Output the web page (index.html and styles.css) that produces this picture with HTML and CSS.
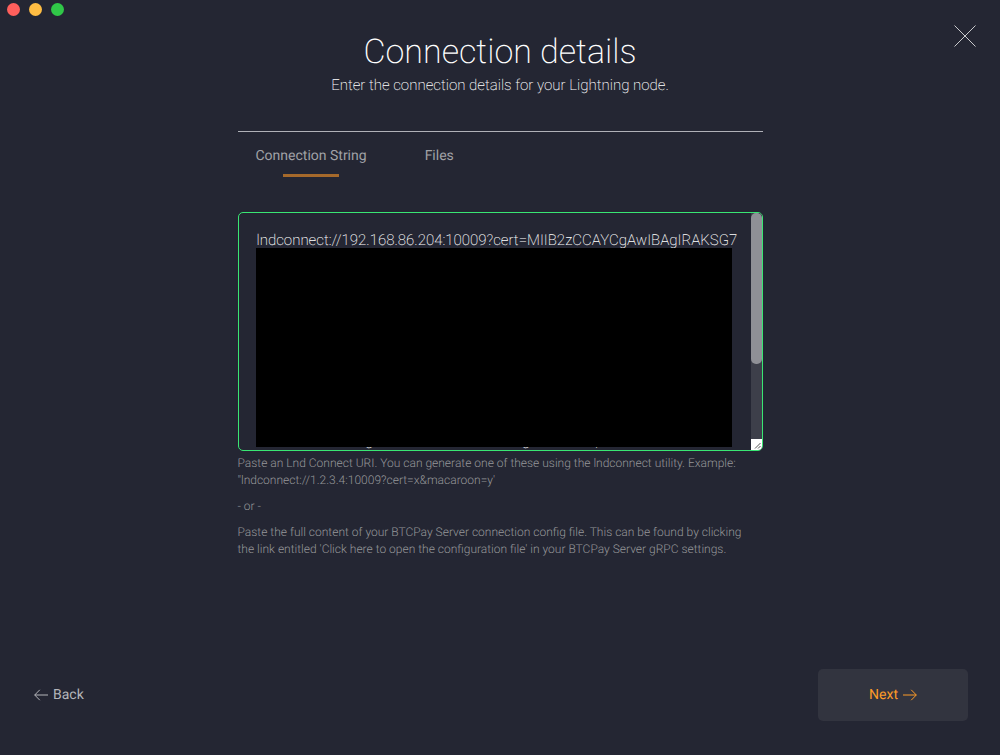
FILE: index.html
```html
<!DOCTYPE html>
<html lang="en">
<head>
    <meta charset="UTF-8">
    <meta name="viewport" content="width=device-width, initial-scale=1.0">
    <title>Connection details</title>
    <link rel="stylesheet" href="styles.css">
</head>
<body>
    <div class="window-controls">
        <span class="dot dot-close"></span>
        <span class="dot dot-minimize"></span>
        <span class="dot dot-zoom"></span>
    </div>
    <button class="close" type="button" aria-label="Close">
        <svg width="22" height="22" viewBox="0 0 22 22"><path d="M0.5 0.5 L21.5 21.5 M21.5 0.5 L0.5 21.5"/></svg>
    </button>

    <form class="wizard">
        <main class="content">
            <header class="header">
                <h1>Connection details</h1>
                <p>Enter the connection details for your Lightning node.</p>
            </header>

            <nav class="tabs">
                <button class="tab active" type="button">Connection String</button>
                <button class="tab" type="button">Files</button>
            </nav>

            <div class="field">
                <textarea id="connection" aria-label="Connection String" spellcheck="false">lndconnect://192.168.86.204:10009?cert=MIIB2zCCAYCgAwIBAgIRAKSG7









                              g                                         g                  p</textarea>
                <div class="redacted"></div>
                <div class="scrollbar">
                    <div class="thumb"></div>
                    <svg class="grip" width="11" height="11" viewBox="0 0 11 11"><path d="M4 9.5 L9.5 4 M7 9.5 L9.5 7"/></svg>
                </div>
            </div>

            <div class="help">
                <p>Paste an Lnd Connect URI. You can generate one of these using the lndconnect utility. Example: "lndconnect://1.2.3.4:10009?cert=x&amp;macaroon=y'</p>
                <p>- or -</p>
                <p>Paste the full content of your BTCPay Server connection config file. This can be found by clicking the link entitled 'Click here to open the configuration file' in your BTCPay Server gRPC settings.</p>
            </div>
        </main>

        <footer class="footer">
            <button class="back" type="button">
                <svg width="14" height="12" viewBox="0 0 14 12"><path d="M14 6 H0.7 M5.8 0.8 L0.7 6 L5.8 11.2"/></svg>
                Back
            </button>
            <button class="next" type="submit">
                Next
                <svg width="14" height="12" viewBox="0 0 14 12"><path d="M0 6 H13.3 M8.2 0.8 L13.3 6 L8.2 11.2"/></svg>
            </button>
        </footer>
    </form>
</body>
</html>
```
FILE: styles.css
```css
* {
    box-sizing: border-box;
}
body {
    margin: 0;
    background-color: #242633;
    color: #fff;
    font-family: Roboto, sans-serif;
    font-size: 14px;
    font-weight: 300;
    text-rendering: geometricPrecision;
}
h1, p {
    margin: 0;
    font-weight: 300;
}
button {
    padding: 0;
    border: none;
    background: none;
    color: #b4b5ba;
    font-family: inherit;
    font-size: 14px;
    text-rendering: inherit;
    cursor: pointer;
}
svg {
    display: block;
    fill: none;
    stroke: currentColor;
}

/* window chrome */
.window-controls {
    position: absolute;
    top: 3px;
    left: 7px;
    display: flex;
    gap: 9px;
}
.dot {
    width: 13px;
    height: 13px;
    border-radius: 50%;
}
.dot-close {
    background-color: #ff5f5c;
}
.dot-minimize {
    background-color: #ffbd43;
}
.dot-zoom {
    background-color: #30c748;
}
.close {
    position: absolute;
    top: 25px;
    right: 24px;
    color: #c8c9cc;
}

.wizard {
    display: flex;
    flex-direction: column;
    min-height: 100vh;
    padding: 30px 32px 34px;
}
.content {
    flex: 1;
    width: 100%;
    max-width: 525px;
    margin: 0 auto;
}
.header {
    padding-bottom: 36px;
    border-bottom: 1px solid #b0b1b8;
    text-align: center;
}
.header h1 {
    font-size: 34px;
    font-weight: 200;
    line-height: 45px;
}
.header p {
    font-size: 15px;
    font-weight: 200;
    line-height: 20px;
}

.tabs {
    display: flex;
    gap: 58px;
    padding: 0 18px;
    margin-bottom: 36px;
}
.tab {
    padding: 15px 0 11px;
    font-weight: 400;
    line-height: 18px;
    color: #a0a1a6;
}
.tab.active::after {
    content: "";
    display: block;
    width: 56px;
    height: 3px;
    margin: 9px auto -12px;
    background-color: #a5692b;
}

.field {
    position: relative;
}
.field textarea {
    display: block;
    width: 100%;
    height: 239px;
    padding: 17px 12px 0 18px;
    border: 1px solid #39e673;
    border-radius: 5px;
    outline: none;
    background: none;
    color: #fff;
    font-family: inherit;
    font-size: 15px;
    font-weight: 200;
    line-height: 20px;
    text-rendering: inherit;
    word-break: break-all;
    resize: none;
    overflow: hidden;
}
.redacted {
    position: absolute;
    top: 36px;
    right: 31px;
    bottom: 4px;
    left: 18px;
    background-color: #000;
}
.scrollbar {
    position: absolute;
    top: 1px;
    right: 1px;
    bottom: 1px;
    width: 11px;
    border-radius: 0 4px 4px 0;
    background-color: #3d3f4a;
    overflow: hidden;
}
.thumb {
    height: 151px;
    border-radius: 5px;
    background-color: #8f9096;
}
.grip {
    position: absolute;
    bottom: 0;
    background-color: #fff;
    color: #555;
}

.help {
    display: flex;
    flex-direction: column;
    gap: 9px;
    padding: 4px 8px 0 0;
    font-size: 12px;
    line-height: 17px;
    color: #959699;
}

.footer {
    display: flex;
    justify-content: space-between;
    align-items: center;
}
.back, .next {
    display: flex;
    align-items: center;
    justify-content: center;
    gap: 5px;
    height: 52px;
    font-weight: 400;
}
.back {
    padding: 0 2px;
}
.next {
    width: 150px;
    border-radius: 5px;
    background-color: #32343f;
    color: #fd9b28;
}
```
